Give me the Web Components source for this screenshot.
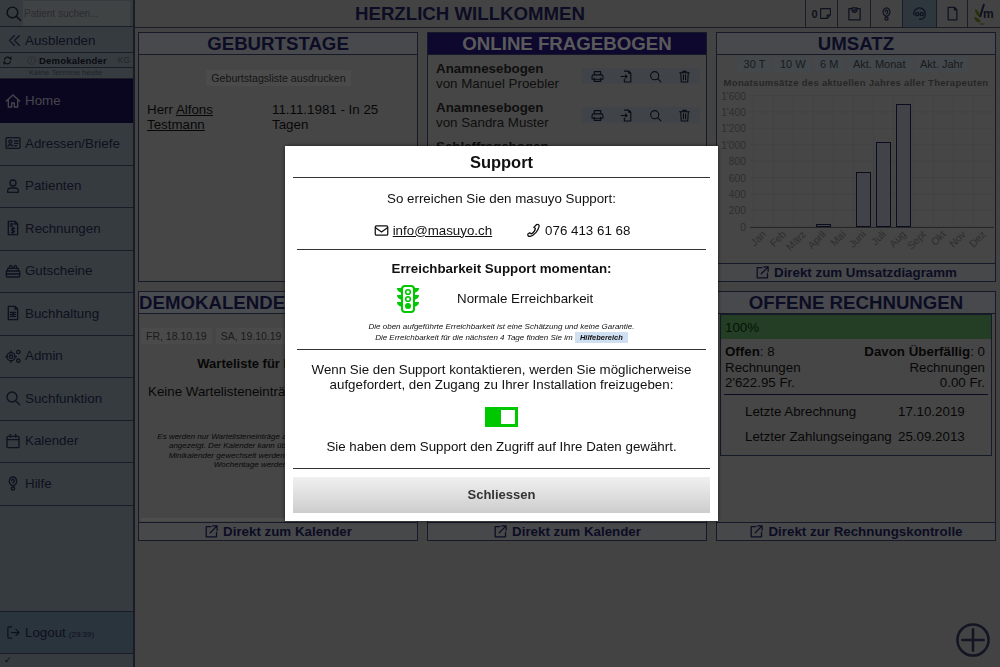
<!DOCTYPE html>
<html lang="de">
<head>
<meta charset="utf-8">
<title>masuyo</title>
<style>
  html, body { margin: 0; height: 100%; }
  body { font-family: "Liberation Sans", Arial, sans-serif; background: #959595; overflow: hidden; }
</style>
</head>
<body>
<app-shell>
  <app-sidebar slot="side">
    <nav-item icon="home" active>Home</nav-item>
    <nav-item icon="card">Adressen/Briefe</nav-item>
    <nav-item icon="user">Patienten</nav-item>
    <nav-item icon="bill">Rechnungen</nav-item>
    <nav-item icon="gift">Gutscheine</nav-item>
    <nav-item icon="book">Buchhaltung</nav-item>
    <nav-item icon="gears">Admin</nav-item>
    <nav-item icon="search">Suchfunktion</nav-item>
    <nav-item icon="calendar">Kalender</nav-item>
    <nav-item icon="help">Hilfe</nav-item>
  </app-sidebar>
  <app-header slot="head"></app-header>
  <dash-panel heading="GEBURTSTAGE"><birthday-list></birthday-list></dash-panel>
  <dash-panel heading="ONLINE FRAGEBOGEN" dark><form-list></form-list></dash-panel>
  <dash-panel heading="UMSATZ" link="Direkt zum Umsatzdiagramm"><revenue-chart></revenue-chart></dash-panel>
  <dash-panel heading="DEMOKALENDER" left link="Direkt zum Kalender"><waiting-list></waiting-list></dash-panel>
  <dash-panel heading="" link="Direkt zum Kalender"></dash-panel>
  <dash-panel heading="OFFENE RECHNUNGEN" link="Direkt zur Rechnungskontrolle"><open-bills></open-bills></dash-panel>
</app-shell>
<support-modal></support-modal>

<script>
const ICONS = {
  search: '<circle cx="10.5" cy="10.5" r="7.5"/><path d="M16 16 22 22"/>',
  back: '<path d="M12 4 4 12l8 8M20 4l-8 8 8 8"/>',
  home: '<path d="M2 12 12 3l10 9M5 10v11h5v-6h4v6h5V10"/>',
  card: '<rect x="1.5" y="4" width="21" height="16" rx="1.5"/><circle cx="8" cy="10" r="2.2"/><path d="M4.5 16.5c.5-2.5 6.5-2.5 7 0M14.5 9h5M14.5 12.5h5M14.5 16h3"/>',
  user: '<circle cx="12" cy="7.5" r="4.5"/><path d="M4 21.5v-2c0-3 2.5-4.5 5-4.5h6c2.5 0 5 1.5 5 4.5v2z"/>',
  bill: '<path d="M5 2h10l4 4v16H5zM15 2v4h4"/><path d="M8 6h4M8 9h3M14.5 12.5h-3a1.5 1.5 0 0 0 0 3h1a1.5 1.5 0 0 1 0 3h-3M12 11v9"/>',
  gift: '<rect x="2" y="12" width="20" height="9" rx="1"/><path d="M2 16.5h20M4 12V8h16v4M7 8c-2-3 2-6 3-3l2 3 2-3c1-3 5 0 3 3"/>',
  book: '<path d="M5 2h10l4 4v16H5zM15 2v4h4"/><path d="M8 11h8M8 14h8M8 17h8M12 11v6"/>',
  gears: '<circle cx="9" cy="13" r="6"/><circle cx="9" cy="13" r="2.5"/><path d="M9 4.5V7M9 19v2.500M1 13h2.500M15 13h2"/><circle cx="20" cy="6" r="2.5"/><circle cx="20" cy="19" r="2.5"/>',
  calendar: '<rect x="3" y="5" width="18" height="17" rx="1.5"/><path d="M3 10h18M8 2v4M16 2v4"/>',
  help: '<path d="M7.500 13C5 9.500 7 3 12 3s7 6.500 4.500 10L14 16h-4zM10 8.500a2 2 0 1 1 3.500 1.500L12 12"/><rect x="9.500" y="18" width="5" height="4.500" rx="2.200"/>',
  logout: '<path d="M9 3H5a2 2 0 0 0-2 2v14a2 2 0 0 0 2 2h4M9 12h12M16 7l5 5-5 5"/>',
  sync: '<path d="M4 10a8 8 0 0 1 14-4l3 3V3M20 14a8 8 0 0 1-14 4l-3-3v6"/>',
  info: '<circle cx="12" cy="12" r="10"/><path d="M12 7v8"/>',
  mail: '<rect x="2" y="4.5" width="20" height="15" rx="2"/><path d="m2.500 7.500 9.500 7 9.500-7"/>',
  phone: '<path d="M17 2.500c2.500-1 4.500 1 4 3-1.500 7-7.500 14-14.500 16-2.500.5-4.500-2-3.500-4l3-2 2.500 2c3-1.500 6-5.500 6.500-9l-2.500-1.500z"/>',
  link: '<path d="M11 4H3.500v16.500H20V13M14 3h7v7M21 3 10 14"/>',
  print: '<path d="M6 9V3h12v6M2 17v-5.500A2.500 2.500 0 0 1 4.500 9h15a2.500 2.500 0 0 1 2.500 2.500V17zM6 15v6h12v-6"/>',
  imp: '<path d="M8 2h8l4 4v16H8v-5M16 2v4h4M2 12h11M10 9l3 3-3 3"/>',
  trash: '<path d="M3 5h18M9 5V2.500h6V5M5 5l1 17h12l1-17M10 9v9M14 9v9"/>',
  note: '<path d="M3 3h18v12l-6 6H3zM21 15h-6v6"/>',
  clip: '<path d="M8 4H3v18h18V4h-5"/><path d="M8 3h8v3a4 4 0 0 1-8 0z"/><path d="M10.500 6.500 12 8l2-3"/>',
  headset: '<path d="M3 14v-2a9 9 0 0 1 18 0v2c0 4-3 7-7 7h-2"/><circle cx="8.500" cy="13" r="2.500"/><circle cx="15.500" cy="13" r="2.500"/>',
  file: '<path d="M5 2h10l4 4v16H5zM15 2v4h4"/>',
  plus: '<circle cx="12" cy="12" r="11"/><path d="M12 4.500v15M4.500 12h15"/>'
};

function ico(name, size, stroke) {
  return `<svg width="${size}" height="${size}" viewBox="0 0 24 24" fill="none" stroke="currentColor" stroke-width="${stroke || 2}" stroke-linecap="round" stroke-linejoin="round" style="display:block;flex:none">${ICONS[name]}</svg>`;
}

class Base extends HTMLElement {
  constructor() {
    super();
    this.attachShadow({ mode: "open" });
  }
  connectedCallback() {
    this.shadowRoot.innerHTML = `<style>${this.getStyles()}</style>${this.getTemplate()}`;
  }
}

class AppShell extends Base {
  getTemplate() {
    return `
      <slot name="side"></slot>
      <div class="main">
        <slot name="head"></slot>
        <div class="grid"><slot></slot></div>
        <div class="add">${ico("plus", 34, 1.8)}</div>
      </div>`;
  }
  getStyles() {
    return `
      :host { display: grid; grid-template-columns: 135px 1fr; height: 667px; }
      .main { display: flex; flex-direction: column; min-width: 0; position: relative; }
      .grid { display: grid; grid-template-columns: 280px 280px 280px; column-gap: 9px; row-gap: 9px;
              grid-template-rows: 250px 250px; padding: 4px 0 0 3px; }
      .add { position: absolute; right: 10px; bottom: 10px; color: #2a3050; }`;
  }
}

class AppSidebar extends Base {
  getTemplate() {
    return `
      <div class="search">${ico("search", 17)}<div class="input">Patient suchen...</div></div>
      <div class="hide">${ico("back", 15, 1.7)}<span>Ausblenden</span></div>
      <div class="cal">
        <div class="top"><span class="s">${ico("sync", 9, 3)}</span><span class="i">${ico("info", 9, 1.5)}</span><b>Demokalender</b><span class="kg">KG</span></div>
        <div class="bot">Keine Termine heute</div>
      </div>
      <slot></slot>
      <div class="fill"></div>
      <div class="logout">${ico("logout", 15)}<span>Logout</span><small>(29:39)</small></div>
      <div class="foot">✓</div>`;
  }
  getStyles() {
    return `
      :host { display: flex; flex-direction: column; background: #78838c; border-right: 2px solid #3a4258;
              box-sizing: border-box; height: 667px; color: #1f2645; }
      .search { height: 27px; box-sizing: border-box; display: flex; align-items: center; padding-left: 5px; gap: 1px;
                border-bottom: 1px solid #3a4258; color: #1a2038; }
      .input { width: 107px; height: 25px; background: #8e9494; font-size: 10px; line-height: 26px; padding-left: 1px;
               color: #5a646e; box-sizing: border-box; }
      .hide { height: 26px; box-sizing: border-box; display: flex; align-items: center; gap: 3px; padding: 1px 0 0 7px;
              font-size: 13.330px; border-bottom: 1px solid #3a4258; }
      .cal { height: 26px; box-sizing: border-box; font-size: 8.500px; color: #14172a; }
      .top { height: 14px; display: flex; align-items: center; border-bottom: 1px solid #3a4258; }
      .s { margin-left: 3px; width: 24px; }
      .i { width: 12px; color: #565f6a; }
      .top b { font-size: 9.500px; letter-spacing: .2px; }
      .kg { margin-left: auto; padding-right: 3px; color: #4a535e; }
      .bot { text-align: center; font-size: 8px; line-height: 10px; color: #454f5a; padding-right: 2px; border-bottom: 1px solid #3a4258; }
      .fill { flex: 1; }
      .logout { height: 43px; box-sizing: border-box; background: #5e7388; border-top: 1px solid #3a4258; border-bottom: 1px solid #3a4258;
                display: flex; align-items: center; padding: 0 0 0 6px; font-size: 13.330px; gap: 4px; }
      .logout small { font-size: 8px; margin-top: 3px; margin-left: -1px; }
      .foot { height: 13px; font-size: 9px; padding-left: 4px; line-height: 13px; color: #14172a; }`;
  }
}

class NavItem extends Base {
  getTemplate() {
    return `<span class="i">${ico(this.getAttribute("icon"), 16, 2)}</span><slot></slot>`;
  }
  getStyles() {
    return `
      :host { display: flex; align-items: center; height: 42.500px; box-sizing: border-box; border-bottom: 1px solid #3a4258;
              font-size: 13.330px; color: #1f2645; padding-bottom: 1px; }
      :host([active]) { background: #170e48; color: #9a9aa6; height: 44px; border-bottom: 0; }
      .i { width: 25px; display: flex; justify-content: center; padding-left: 1px; box-sizing: border-box; }`;
  }
}

class AppHeader extends Base {
  getTemplate() {
    return `
      <h1>HERZLICH WILLKOMMEN</h1>
      <div class="tool" style="width:32px"><b>0</b>${ico("note", 13)}</div>
      <div class="tool" style="width:33px">${ico("clip", 15)}</div>
      <div class="tool" style="width:32px">${ico("help", 15)}</div>
      <div class="tool on" style="width:34px">${ico("headset", 15)}</div>
      <div class="tool" style="width:31px">${ico("file", 15)}</div>
      <div class="tool logo">
        <svg width="13" height="24" viewBox="0 0 13 24"><path d="M2 7c3 1 5 4 5 8-3-1-5-4-5-8zM1 15c3 0 6 2 7 5-4 1-6-1-7-5zM6 22c2-1 4-1 6 0-2 1-4 1-6 0z" fill="#5f6a1a"/><path d="M7 15 11 2" stroke="#1f2645" stroke-width="2" fill="none"/></svg>
        <span>m</span>
      </div>`;
  }
  getStyles() {
    return `
      :host { display: flex; height: 28px; box-sizing: border-box; border-bottom: 1px solid #3a4258; color: #1f2645; }
      h1 { margin: 0; font-size: 18.670px; line-height: 27px; width: 670px; text-align: center; color: #1c1c50; flex: none; }
      .tool { border-left: 1px solid #3a4258; display: flex; align-items: center; justify-content: center; gap: 1px; font-size: 11px; box-sizing: border-box; flex: none; }
      .tool.on { background: #647a88; }
      .logo { width: 33px; justify-content: flex-start; gap: 0; padding-left: 5px; }
      .logo span { font-size: 12px; font-weight: bold; margin-left: -3px; color: #1f2645; }`;
  }
}

class DashPanel extends Base {
  getTemplate() {
    const link = this.getAttribute("link");
    return `
      <div class="title"><span>${this.getAttribute("heading")}</span></div>
      <div class="body"><slot></slot></div>
      ${link ? `<div class="link">${ico("link", 15)}<span>${link}</span></div>` : ""}`;
  }
  getStyles() {
    return `
      :host { display: flex; flex-direction: column; border: 1px solid #323858; box-sizing: border-box; background: #9c9c9c; min-width: 0; overflow: hidden; }
      .title { height: 22px; flex: none; box-sizing: border-box; background: #9da2a8; border-bottom: 1px solid #323858;
               text-align: center; font-size: 18.670px; font-weight: bold; line-height: 21px; color: #1c1c50; white-space: nowrap; }
      :host([dark]) .title { background: #1f1266; color: #c8c8c8; }
      :host([left]) .title { text-align: left; }
      :host([left]) .title span { background: #a4aab2; }
      .body { flex: 1; min-height: 0; overflow: hidden; color: #111; }
      .link { height: 18px; flex: none; box-sizing: border-box; border-top: 1px solid #323858; margin: 0 -1px; display: flex; justify-content: center; align-items: center;
              gap: 4px; font-size: 13.330px; font-weight: bold; color: #1c1c50; background: #9ca0a4; }`;
  }
}

class BirthdayList extends Base {
  getTemplate() {
    return `
      <div class="btnrow"><span class="btn">Geburtstagsliste ausdrucken</span></div>
      <div class="row">
        <div class="name">Herr <u>Alfons Testmann</u></div>
        <div>11.11.1981 - In 25 Tagen</div>
      </div>`;
  }
  getStyles() {
    return `
      :host { display: block; font-size: 13.330px; line-height: 15px; color: #111; }
      .btnrow { display: flex; justify-content: center; padding: 15px 0 0 0; }
      .btn { background: #a6a6a6; padding: 1px 5px; font-size: 10.600px; line-height: 14px; color: #333; margin-left: 1px; }
      .row { display: grid; grid-template-columns: 125px 125px; padding: 16px 0 0 8px; }
      .name { width: 90px; }`;
  }
}

class FormList extends Base {
  getTemplate() {
    const act = `<div class="acts">${ico("print", 13)}${ico("imp", 13)}${ico("search", 13)}${ico("trash", 13)}</div>`;
    return `
      <div class="item"><div><b>Anamnesebogen</b><br>von Manuel Proebler</div>${act}</div>
      <div class="item"><div><b>Anamnesebogen</b><br>von Sandra Muster</div>${act}</div>
      <div class="item"><div><b>Schlaffragebogen</b></div></div>`;
  }
  getStyles() {
    return `
      :host { display: block; padding: 6px 6px 0 8px; font-size: 13.330px; line-height: 15px; color: #222; }
      .item { display: flex; justify-content: space-between; height: 39px; }
      .acts { width: 118px; height: 16px; margin-top: 7px; background: #8f98a0; display: flex; justify-content: space-around; align-items: center; color: #14172a; padding: 0 1px; box-sizing: border-box; }`;
  }
}

class RevenueChart extends Base {
  getTemplate() {
    const months = ["Jan", "Feb", "März", "April", "Mai", "Juni", "Juli", "Aug", "Sept", "Okt", "Nov", "Dez"];
    const labels = ["1'600", "1'400", "1'200", "1'000", "800", "600", "400", "200", "0"];
    let grid = "", ylab = "", xlab = "";
    labels.forEach((l, i) => {
      const y = 6.5 + i * 16.4;
      grid += `<path d="M33 ${y}H277" stroke="#939393"/>`;
      ylab += `<text x="29" y="${y + 4}" text-anchor="end">${l}</text>`;
    });
    months.forEach((m, i) => {
      const x = 36.5 + i * 20;
      grid += `<path d="M${x} 6V139" stroke="#939393"/>`;
      xlab += `<text transform="translate(${x + 13} 146) rotate(-45)" text-anchor="end">${m}</text>`;
    });
    const bars = [[99, 135], [139, 83], [159, 53], [179, 15]];
    const rects = bars.map(b => `<rect x="${b[0] + .5}" y="${b[1] + .5}" width="14" height="${137 - b[1]}" fill="#90969f" stroke="#1c1c45"/>`).join("");
    return `
      <div class="btns"><span>30 T</span><span>10 W</span><span>6 M</span><span>Akt. Monat</span><span>Akt. Jahr</span></div>
      <div class="cap">Monatsumsätze des aktuellen Jahres aller Therapeuten</div>
      <svg width="278" height="170" viewBox="0 0 278 170">
        ${grid}${rects}
        <path d="M33 138.500H277" stroke="#555"/>
        <g font-family="Liberation Sans, Arial, sans-serif" font-size="10.300" fill="#666">${ylab}${xlab}</g>
      </svg>`;
  }
  getStyles() {
    return `
      :host { display: block; }
      .btns { display: flex; justify-content: center; gap: 3.5px; padding: 2px 5px 0 0; font-size: 11px; line-height: 15px; color: #3c3c3c; }
      .btns span { background: #959fa8; padding: 0 5.5px; }
      .cap { text-align: center; font-size: 9.500px; font-weight: bold; color: #555; line-height: 12px; padding-top: 5px; letter-spacing: .3px; white-space: nowrap; }
      svg { display: block; margin-top: 0; }`;
  }
}

class WaitingList extends Base {
  getTemplate() {
    return `
      <div class="tabs"><span>FR, 18.10.19</span><span>SA, 19.10.19</span></div>
      <div class="head">Warteliste für FR, 18.10.19</div>
      <div class="none">Keine Wartelisteneinträge</div>
      <div class="note">Es werden nur Wartelisteneinträge aus dem ausgewählten Kalender<br>angezeigt. Der Kalender kann über die Auswahl oben oder im<br>Minikalender gewechselt werden. Weitere Einträge für andere<br>Wochentage werden dort angezeigt.</div>
      <div class="bar"></div>`;
  }
  getStyles() {
    return `
      :host { display: block; position: relative; height: 100%; color: #111; }
      .tabs { display: flex; gap: 4px; padding: 14px 0 0 2px; font-size: 10.500px; line-height: 16px; color: #3c3c3c; white-space: nowrap; }
      .tabs span { background: #a4a4a4; padding: 0 5px; }
      .head { font-size: 13px; font-weight: bold; text-align: center; padding: 12px 0 0 0; line-height: 15px; white-space: nowrap; }
      .none { font-size: 13.330px; line-height: 16px; padding: 13px 0 0 9px; white-space: nowrap; }
      .note { font: italic 8px/9.300px "Liberation Sans", Arial, sans-serif; text-align: center; padding-top: 32px; white-space: nowrap; }
      .bar { position: absolute; left: 2px; right: 2px; bottom: 1px; height: 3px; background: #aeaeae; }`;
  }
}

class OpenBills extends Base {
  getTemplate() {
    return `
      <div class="box">
        <div class="pct">100%</div>
        <div class="cols">
          <div><b>Offen</b>: 8<br>Rechnungen<br>2'622.95 Fr.</div>
          <div class="r"><b>Davon Überfällig</b>: 0<br>Rechnungen<br>0.00 Fr.</div>
        </div>
        <div class="line"></div>
        <div class="kv first"><span>Letzte Abrechnung</span><span>17.10.2019</span></div>
        <div class="kv"><span>Letzter Zahlungseingang</span><span>25.09.2013</span></div>
      </div>`;
  }
  getStyles() {
    return `
      :host { display: block; font-size: 13.330px; line-height: 15.500px; color: #111; padding: 0 3px; }
      .box { border: 1px solid #323858; height: 142px; box-sizing: border-box; }
      .pct { height: 24px; box-sizing: border-box; background: #4f8a50; color: #0e2a0e; line-height: 24px; padding: 1px 0 0 4px; }
      .cols { display: flex; justify-content: space-between; padding: 5px 6px 0 4px; }
      .r { text-align: right; }
      .line { border-top: 1px solid #1c1c45; margin: 3px 3px 0; }
      .kv { display: grid; grid-template-columns: 153px auto; padding-left: 24px; line-height: 25px; white-space: nowrap; }
      .first { margin-top: 4px; }`;
  }
}

class SupportModal extends Base {
  getTemplate() {
    return `
      <div class="dlg">
        <h2>Support</h2>
        <div class="hr wide"></div>
        <p class="t1">So erreichen Sie den masuyo Support:</p>
        <div class="contact">
          <span>${ico("mail", 15)}<u>info@masuyo.ch</u></span>
          <span>${ico("phone", 15)}076 413 61 68</span>
        </div>
        <div class="hr"></div>
        <p class="t2"><b>Erreichbarkeit Support momentan:</b></p>
        <div class="state">
          <svg width="22" height="28" viewBox="0 0 22 28">
            <path d="M5 3 0 3c0 3 2 4 5 5zM5 10 0 10c0 3 2 4 5 5zM5 17 0 17c0 3 2 4 5 5zM17 3 22 3c0 3-2 4-5 5zM17 10 22 10c0 3-2 4-5 5zM17 17 22 17c0 3-2 4-5 5z" fill="#00c800"/>
            <rect x="5" y="1" width="12" height="26" rx="3" fill="#fff" stroke="#00c800" stroke-width="2"/>
            <circle cx="11" cy="7" r="2.300" fill="none" stroke="#00c800" stroke-width="1.600"/>
            <circle cx="11" cy="14" r="2.300" fill="none" stroke="#00c800" stroke-width="1.600"/>
            <circle cx="11" cy="21" r="3" fill="#00c800"/>
          </svg>
          <span>Normale Erreichbarkeit</span>
        </div>
        <p class="small">Die oben aufgeführte Erreichbarkeit ist eine Schätzung und keine Garantie.<br>Die Erreichbarkeit für die nächsten 4 Tage finden Sie im <span class="tag">Hilfebereich</span></p>
        <div class="hr"></div>
        <p class="t3">Wenn Sie den Support kontaktieren, werden Sie möglicherweise<br>aufgefordert, den Zugang zu Ihrer Installation freizugeben:</p>
        <div class="toggle"><i></i></div>
        <p class="t4">Sie haben dem Support den Zugriff auf Ihre Daten gewährt.</p>
        <div class="hr wide"></div>
        <div class="close">Schliessen</div>
      </div>`;
  }
  getStyles() {
    return `
      :host { position: fixed; inset: 0; background: rgba(0,0,0,.55); display: flex; align-items: center; justify-content: center; }
      .dlg { width: 433px; height: 375px; background: #fff; box-sizing: border-box; padding: 0 8px; color: #111; font-size: 13.330px; line-height: 15.500px; text-align: center;
             box-shadow: 0 0 4px rgba(0,0,0,.6); margin-left: 3px; }
      h2 { margin: 0; font-size: 16.500px; line-height: 31px; height: 31px; padding-top: 1px; box-sizing: border-box; }
      p { margin: 0; }
      .hr { border-top: 1px solid #333; margin: 0 4px; }
      .hr.wide { margin: 0; }
      .t1 { padding-top: 13px; }
      .contact { display: flex; justify-content: center; gap: 34px; padding: 16px 0 11px 1px; }
      .contact span { display: flex; align-items: center; gap: 4px; }
      .t2 { padding-top: 11px; font-size: 13.330px; }
      .state { display: flex; align-items: center; height: 30px; margin-top: 7px; padding-left: 104px; gap: 38px; }
      .small { font: italic 8px/11px "Liberation Sans", Arial, sans-serif; padding: 7px 0 6px; height: 22px; }
      .tag { background: #cfe0f3; font-weight: bold; padding: 1px 5px; font-size: 7.500px; }
      .t3 { padding-top: 12px; }
      .toggle { width: 33px; height: 20px; background: #00c800; margin: 14px auto 0; padding: 3px 3px 3px 16px; box-sizing: border-box; }
      .toggle i { display: block; width: 14px; height: 14px; background: #fff; }
      .t4 { padding-top: 12px; }
      .t4 + .hr { margin-top: 14px; }
      .close { margin-top: 8px; height: 36px; background: linear-gradient(#f0f0f0, #cdcdcd); font-weight: bold; font-size: 13px; line-height: 36px; color: #333; }`;
  }
}

customElements.define("app-shell", AppShell);
customElements.define("app-sidebar", AppSidebar);
customElements.define("nav-item", NavItem);
customElements.define("app-header", AppHeader);
customElements.define("dash-panel", DashPanel);
customElements.define("birthday-list", BirthdayList);
customElements.define("form-list", FormList);
customElements.define("revenue-chart", RevenueChart);
customElements.define("waiting-list", WaitingList);
customElements.define("open-bills", OpenBills);
customElements.define("support-modal", SupportModal);
</script>
</body>
</html>
